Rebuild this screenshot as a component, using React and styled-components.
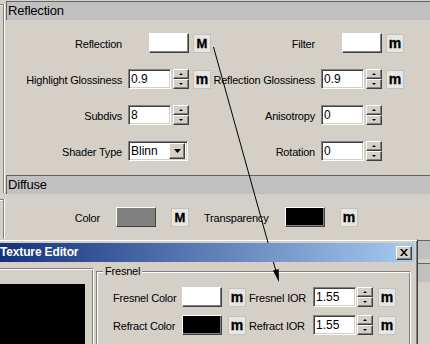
import React from 'react';
import styled, { createGlobalStyle, css } from 'styled-components';

const GlobalStyle = createGlobalStyle`
  html, body { margin: 0; padding: 0; }
  body {
    background: #d4d0c8;
    font-family: "Liberation Sans", Arial, sans-serif;
    color: #000;
    overflow: hidden;
  }
`;

const raised = css`
  box-sizing: border-box;
  border: 1px solid;
  border-color: #fff #404040 #404040 #fff;
  box-shadow: inset -1px -1px #808080;
`;

const sunken = css`
  box-sizing: border-box;
  border: 1px solid;
  border-color: #808080 #fff #fff #808080;
  box-shadow: inset 1px 1px #404040, inset -1px -1px #d4d0c8;
`;

const Page = styled.div`
  position: relative;
  width: 430px;
  height: 344px;
  overflow: hidden;
  display: flex;
  background: #d4d0c8;
`;

const LeftStrip = styled.div`
  flex: none;
  width: 6px;
  display: flex;
  flex-direction: column;
  gap: 6px;
  padding-top: 4px;
  box-sizing: border-box;
`;

const StripFrame = styled.div`
  width: 3px;
  flex: ${p => (p.$h ? 'none' : '1')};
  height: ${p => (p.$h ? `${p.$h}px` : 'auto')};
  border-top: 1px solid #808080;
  border-right: 1px solid #808080;
  box-shadow: inset 0 1px #fff, 1px 0 #fff;
`;

const Main = styled.div`
  flex: 1;
  min-width: 0;
  display: flex;
  flex-direction: column;
`;

const SectionHeader = styled.div`
  flex: none;
  height: 18px;
  margin-top: ${p => p.$mt || 0}px;
  border-top: 1px solid #646464;
  border-left: 1px solid #646464;
  background: #c0c0c0;
  font-size: 13px;
  letter-spacing: -0.2px;
  line-height: 18px;
  padding-left: 1px;
  white-space: nowrap;
`;

const ParamGrid = styled.div`
  display: grid;
  grid-template-columns: 122px 65px 18px 110px 65px 18px;
  grid-auto-rows: 20px;
  row-gap: 16px;
  padding-top: 13px;
  align-items: center;
`;

const labelText = css`
  font-size: 11px;
  letter-spacing: -0.2px;
  line-height: 18px;
  padding-top: 2px;
  white-space: nowrap;
`;

const Label = styled.div`
  ${labelText};
  justify-self: end;
  padding-right: 6px;
`;

const InlineLabel = styled.div`
  ${labelText};
  flex: none;
  width: ${p => p.$w}px;
  margin-left: ${p => p.$ml || 0}px;
  text-align: ${p => p.$align || 'left'};
`;

const ControlBox = styled.div`
  width: 61px;
  height: 20px;
  display: flex;
  justify-content: ${p => (p.$end ? 'flex-end' : 'flex-start')};
  gap: 2px;
`;

const Swatch = styled.div`
  ${raised};
  flex: none;
  width: 40px;
  height: 20px;
  margin-left: ${p => p.$ml || 0}px;
  background: ${p => p.$color};
`;

const Field = styled.div`
  ${sunken};
  flex: none;
  width: ${p => p.$w || 43}px;
  height: 20px;
  background: #fff;
  font-size: 12px;
  line-height: 19px;
  padding-left: 2px;
  white-space: nowrap;
  overflow: hidden;
`;

const SpinStack = styled.div`
  flex: none;
  width: 16px;
  height: 20px;
  display: flex;
  flex-direction: column;
`;

const SpinBtn = styled.div`
  ${raised};
  height: 10px;
  background: #d4d0c8;
  display: flex;
  align-items: center;
  justify-content: center;
`;

const TinyArrow = styled.div`
  width: 0;
  height: 0;
  border-left: 2px solid transparent;
  border-right: 2px solid transparent;
  ${p =>
    p.$down
      ? css`border-top: 2px solid #000;`
      : css`border-bottom: 2px solid #000;`}
`;

const Spinner = () => (
  <SpinStack>
    <SpinBtn><TinyArrow /></SpinBtn>
    <SpinBtn><TinyArrow $down /></SpinBtn>
  </SpinStack>
);

const MButton = styled.div`
  box-sizing: border-box;
  flex: none;
  width: 18px;
  height: 19px;
  margin-left: ${p => p.$ml || 0}px;
  background: #e8e6e2;
  border: 1px solid #c4c1bb;
  display: flex;
  align-items: center;
  justify-content: center;
  font-weight: bold;
  font-size: ${p => (p.$cap ? 13 : 14)}px;
  line-height: ${p => (p.$cap ? 13 : 14)}px;
  -webkit-text-stroke: 0.35px #000;
`;

const Select = styled.div`
  ${sunken};
  width: 60px;
  height: 20px;
  background: #fff;
  display: flex;
  align-items: center;
  justify-content: space-between;
  padding: 0 2px 0 2px;
  font-size: 12px;
  line-height: 19px;
`;

const SelectBtn = styled.div`
  ${raised};
  width: 16px;
  height: 16px;
  background: #d4d0c8;
  display: flex;
  align-items: center;
  justify-content: center;
`;

const InlineRow = styled.div`
  display: flex;
  align-items: center;
  height: 20px;
  margin-top: 13px;
`;

const Dialog = styled.div`
  position: absolute;
  left: -10px;
  top: 239px;
  width: 428px;
  height: 130px;
  box-sizing: border-box;
  z-index: 5;
  background: #d4d0c8;
  border: 1px solid;
  border-color: #d4d0c8 #404040 #404040 #d4d0c8;
  box-shadow: inset 1px 1px #fff, inset -1px -1px #808080;
  padding: 3px;
  display: flex;
  flex-direction: column;
`;

const TitleBar = styled.div`
  flex: none;
  height: 19px;
  background: linear-gradient(to right, #12307a, #a6caf0);
  display: flex;
  align-items: center;
  justify-content: space-between;
  padding: 0 2px 0 6px;
  color: #fff;
  font-weight: bold;
  font-size: 12px;
  line-height: 19px;
  letter-spacing: -0.15px;
  white-space: nowrap;
`;

const CloseBtn = styled.div`
  ${raised};
  width: 16px;
  height: 14px;
  background: #d4d0c8;
  display: flex;
  align-items: center;
  justify-content: center;
`;

const DialogBody = styled.div`
  display: flex;
  align-items: flex-start;
  padding-top: 6px;
`;

const PreviewPane = styled.div`
  flex: none;
  box-sizing: border-box;
  width: 100px;
  height: 90px;
  border-top: 1px solid #808080;
  border-right: 1px solid #fff;
  box-shadow: inset 0 1px #fff, inset -1px 0 #808080;
  padding-top: 15px;
`;

const PreviewBlack = styled.div`
  width: 85px;
  height: 70px;
  margin-left: 6px;
  background: #000;
`;

const GroupBox = styled.div`
  position: relative;
  flex: none;
  box-sizing: border-box;
  width: 315px;
  height: 90px;
  margin: 3px 0 0 2px;
  border-top: 1px solid #808080;
  border-left: 1px solid #808080;
  border-right: 1px solid #fff;
  box-shadow: inset 1px 1px #fff, inset -1px 0 #808080;
  padding: 15px 0 0 16px;
`;

const Legend = styled.div`
  position: absolute;
  top: -8px;
  left: 6px;
  padding: 0 2px;
  background: #d4d0c8;
  font-size: 11px;
  letter-spacing: -0.2px;
  line-height: 14px;
  white-space: nowrap;
`;

const FresnelGrid = styled.div`
  display: grid;
  grid-template-columns: 69px 46px 21px 64px 44px 21px 18px;
  grid-auto-rows: 20px;
  row-gap: 8px;
  align-items: center;
`;

const CellLabel = styled.div`
  ${labelText};
`;

const ArrowLayer = styled.svg`
  position: absolute;
  left: 0;
  top: 0;
  z-index: 10;
  pointer-events: none;
`;

export default function App() {
  return (
    <>
      <GlobalStyle />
      <Page>
        <LeftStrip>
          <StripFrame $h={188} />
          <StripFrame />
        </LeftStrip>
        <Main>
          <SectionHeader $mt={1}>Reflection</SectionHeader>
          <ParamGrid>
            <Label>Reflection</Label>
            <ControlBox $end><Swatch $color="#ffffff" /></ControlBox>
            <MButton $cap>M</MButton>
            <Label>Filter</Label>
            <ControlBox $end><Swatch $color="#ffffff" /></ControlBox>
            <MButton>m</MButton>

            <Label>Highlight Glossiness</Label>
            <ControlBox><Field>0.9</Field><Spinner /></ControlBox>
            <MButton>m</MButton>
            <Label>Reflection Glossiness</Label>
            <ControlBox><Field>0.9</Field><Spinner /></ControlBox>
            <MButton>m</MButton>

            <Label>Subdivs</Label>
            <ControlBox><Field>8</Field><Spinner /></ControlBox>
            <span />
            <Label>Anisotropy</Label>
            <ControlBox><Field>0</Field><Spinner /></ControlBox>
            <span />

            <Label>Shader Type</Label>
            <ControlBox>
              <Select>
                <span>Blinn</span>
                <SelectBtn>
                  <svg width="7" height="4" viewBox="0 0 7 4"><polygon points="0,0 7,0 3.5,4" fill="#000" /></svg>
                </SelectBtn>
              </Select>
            </ControlBox>
            <span />
            <Label>Rotation</Label>
            <ControlBox><Field>0</Field><Spinner /></ControlBox>
            <span />
          </ParamGrid>

          <SectionHeader $mt={14}>Diffuse</SectionHeader>
          <InlineRow>
            <InlineLabel $w={94} $align="right">Color</InlineLabel>
            <Swatch $color="#808080" $ml={16} />
            <MButton $cap $ml={15}>M</MButton>
            <InlineLabel $w={65} $ml={15}>Transparency</InlineLabel>
            <Swatch $color="#000000" $ml={16} />
            <MButton $ml={15}>m</MButton>
          </InlineRow>

          <SectionHeader $mt={13} />
          <SectionHeader $mt={4} />
        </Main>

        <Dialog>
          <TitleBar>
            <span>Texture Editor</span>
            <CloseBtn>
              <svg width="8" height="7" viewBox="0 0 8 7">
                <path d="M0 0h2l2 2.4L6 0h2L5 3.5L8 7H6L4 4.6L2 7H0l3-3.5z" fill="#000" />
              </svg>
            </CloseBtn>
          </TitleBar>
          <DialogBody>
            <PreviewPane>
              <PreviewBlack />
            </PreviewPane>
            <GroupBox>
              <Legend>Fresnel</Legend>
              <FresnelGrid>
                <CellLabel>Fresnel Color</CellLabel>
                <Swatch $color="#ffffff" />
                <MButton>m</MButton>
                <CellLabel>Fresnel IOR</CellLabel>
                <Field>1.55</Field>
                <Spinner />
                <MButton>m</MButton>

                <CellLabel>Refract Color</CellLabel>
                <Swatch $color="#000000" />
                <MButton>m</MButton>
                <CellLabel>Refract IOR</CellLabel>
                <Field>1.55</Field>
                <Spinner />
                <MButton>m</MButton>
              </FresnelGrid>
            </GroupBox>
          </DialogBody>
        </Dialog>

        <ArrowLayer width="430" height="344" viewBox="0 0 430 344">
          <line x1="213.5" y1="47" x2="268.1" y2="243" stroke="#000" strokeWidth="1" />
          <line x1="273.4" y1="262" x2="276.5" y2="273" stroke="#000" strokeWidth="1" />
          <polygon points="279,282 272.9,270.6 278.7,269" fill="#000" />
        </ArrowLayer>
      </Page>
    </>
  );
}
